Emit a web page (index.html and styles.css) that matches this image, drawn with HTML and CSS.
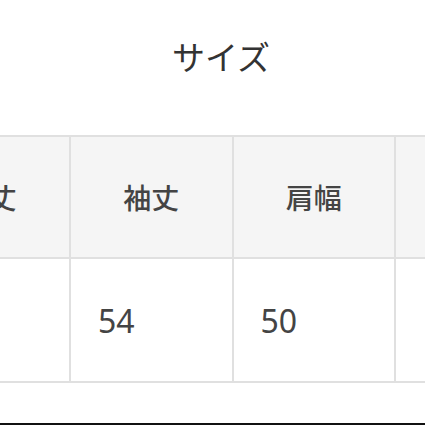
FILE: index.html
```html
<!DOCTYPE html>
<html lang="ja">
<head>
<meta charset="utf-8">
<link rel="stylesheet" href="styles.css">
</head>
<body>
<div class="page">
  <h2 class="title">サイズ</h2>
  <div class="table">
    <div class="cell head">着丈</div>
    <div class="cell head">袖丈</div>
    <div class="cell head">肩幅</div>
    <div class="cell head"></div>
    <div class="cell body"></div>
    <div class="cell body">54</div>
    <div class="cell body">50</div>
    <div class="cell body"></div>
  </div>
  <div class="rule"></div>
</div>
</body>
</html>
```
FILE: styles.css
```css
html, body {
  margin: 0;
  padding: 0;
  background: #fff;
}
.page {
  width: 425px;
  height: 425px;
  overflow: hidden;
  font-family: "Noto Sans", "Noto Sans CJK JP", sans-serif;
}
.title {
  margin: 0;
  padding: 42px 0 61px 17px;
  height: 32px;
  line-height: 32px;
  font-size: 33px;
  font-weight: 400;
  color: #333;
  text-align: center;
}
.table {
  display: grid;
  grid-template-columns: repeat(4, 160.5px);
  grid-template-rows: 120px 122px;
  gap: 2px;
  padding: 2px;
  background: #e0e0e0;
  margin-left: -93.5px;
  width: max-content;
}
.cell {
  display: flex;
  align-items: center;
  color: #444;
}
.head {
  background: #f5f5f5;
  justify-content: center;
  font-size: 28px;
  font-family: "Noto Sans CJK JP", sans-serif;
  font-weight: 500;
}
.body {
  background: #fff;
  font-size: 32px;
  padding-left: 27px;
}
.rule {
  margin-top: 40px;
  height: 2px;
  background: #111;
}
```
